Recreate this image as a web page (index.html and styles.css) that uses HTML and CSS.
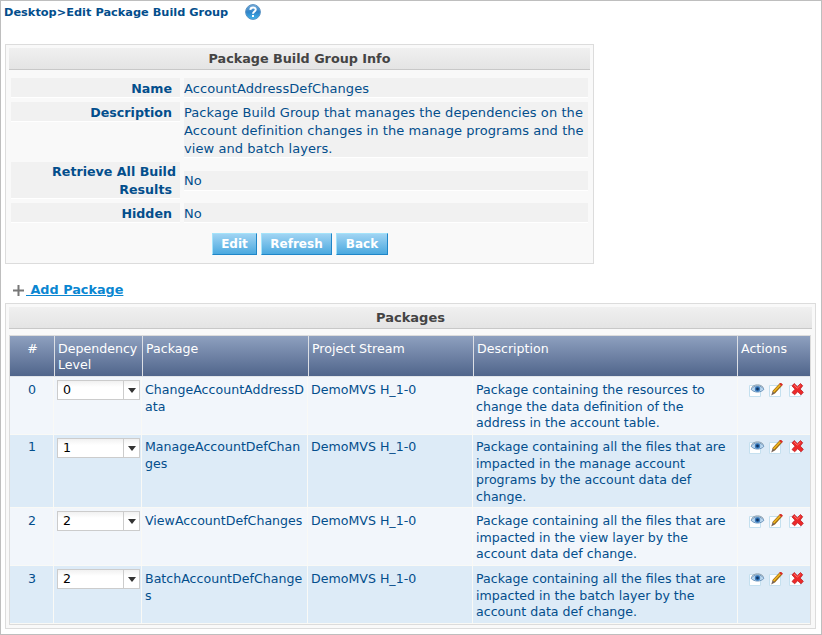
FILE: index.html
```html
<!DOCTYPE html>
<html lang="en">
<head>
<meta charset="utf-8">
<title>Edit Package Build Group</title>
<link rel="stylesheet" href="styles.css">
</head>
<body>
<svg class="defs" width="0" height="0" aria-hidden="true">
  <defs>
    <linearGradient id="help-fill" x1="0" y1="0" x2="0" y2="1"><stop offset="0" stop-color="#78aedb"/><stop offset=".5" stop-color="#2f83c8"/><stop offset="1" stop-color="#40b5ed"/></linearGradient>
    <symbol id="eye" viewBox="0 0 17 16">
      <path d="M.5 2.5h11v11H.5z" fill="#fff" stroke="#c5e0ef"/>
      <path d="M2 6.200C5 2 12 2 15 6.200 12 10 5 10 2 6.200z" fill="#bcd8ef" stroke="#7097bd" stroke-width="1"/>
      <path d="M2.500 4.500C5.500 1 11.500 1 14.500 4.500" fill="none" stroke="#8b9dad" stroke-width="1"/>
      <circle cx="8.500" cy="6" r="2.700" fill="#397cc0"/><circle cx="8.500" cy="6" r="1.400" fill="#12345f"/>
    </symbol>
    <symbol id="pencil" viewBox="0 0 17 16">
      <path d="M.5 2.500h11v11H.5z" fill="#fff" stroke="#c5e0ef"/>
      <path d="M4.500 9.500 11.500 1.800" stroke="#9a6815" stroke-width="3.400"/>
      <path d="M4.500 9 11.500 1.500" stroke="#efb51f" stroke-width="1.800"/>
      <path d="m11.300 2 1.500-1.500" stroke="#d62e26" stroke-width="3.400"/>
      <path d="m3.600 8.200 2.300 2.200-3.700 2.100z" fill="#77665b"/>
    </symbol>
    <symbol id="cross" viewBox="0 0 17 16">
      <path d="M.5 2.500h11v11H.5z" fill="#fff" stroke="#c5e0ef"/>
      <path d="m5.200.5 3.200 3.200L11.500.500l2.200 2.300-2.500 3.300 3.100 3.200-2.200 2.500-3.400-3-3 2.900L3 9.500l3-3.300-3-3.300z" fill="#ed2929" stroke="#bd2026" stroke-width=".8"/>
      <path d="m5.200 2 3.100 3.200 3.200-3" fill="none" stroke="#ff7068" stroke-width="1"/>
    </symbol>
  </defs>
</svg>
<main class="page">
  <header class="crumbs">
    <span class="crumb-text">Desktop&gt;Edit Package Build Group</span>
    <svg class="help" viewBox="0 0 16 16"><circle cx="8" cy="8" r="7.400" fill="url(#help-fill)" stroke="#5b92c2"/><path d="M5.300 5.900C5.500 2.500 10.800 2.700 10.700 5.700 10.600 7.500 8 7.500 8 9.800" fill="none" stroke="#fff" stroke-width="2"/><path d="M7 11h2v2H7z" fill="#fff"/></svg>
  </header>

  <section class="panel info">
    <h2 class="bar">Package Build Group Info</h2>
    <dl class="fields">
      <dt>Name</dt><dd>AccountAddressDefChanges</dd>
      <dt>Description</dt>
      <dd>Package Build Group that manages the dependencies on the<br>Account definition changes in the manage programs and the<br>view and batch layers.</dd>
      <dt class="two"><span class="over">Retrieve All Build</span><br>Results</dt><dd class="mid">No</dd>
      <dt>Hidden</dt><dd>No</dd>
    </dl>
    <div class="buttons"><button class="b-edit">Edit</button><button class="b-refresh">Refresh</button><button class="b-back">Back</button></div>
  </section>

  <div class="add">
    <svg class="plus" viewBox="0 0 11 11"><path d="M5.500 0v11M0 5.500h11" stroke="#777" stroke-width="2"/></svg>
    <a href="#">&nbsp;Add Package</a>
  </div>

  <section class="panel packages">
    <h2 class="bar">Packages</h2>
    <div class="table">
      <div class="row head">
        <div class="c">#</div><div>Dependency<br>Level</div><div>Package</div><div>Project Stream</div><div>Description</div><div>Actions</div>
      </div>
      <div class="row r0">
        <div class="c">0</div><div class="lvl"><span class="select"><span>0</span><i></i></span></div><div>ChangeAccountAddressD<br>ata</div><div>DemoMVS H_1-0</div><div>Package containing the resources to<br>change the data definition of the<br>address in the account table.</div>
        <div class="acts"><svg><use href="#eye"/></svg><svg><use href="#pencil"/></svg><svg><use href="#cross"/></svg></div>
      </div>
      <div class="row alt r1">
        <div class="c">1</div><div class="lvl"><span class="select"><span>1</span><i></i></span></div><div>ManageAccountDefChan<br>ges</div><div>DemoMVS H_1-0</div><div>Package containing all the files that are<br>impacted in the manage account<br>programs by the account data def<br>change.</div>
        <div class="acts"><svg><use href="#eye"/></svg><svg><use href="#pencil"/></svg><svg><use href="#cross"/></svg></div>
      </div>
      <div class="row r2">
        <div class="c">2</div><div class="lvl"><span class="select"><span>2</span><i></i></span></div><div>ViewAccountDefChanges</div><div>DemoMVS H_1-0</div><div>Package containing all the files that are<br>impacted in the view layer by the<br>account data def change.</div>
        <div class="acts"><svg><use href="#eye"/></svg><svg><use href="#pencil"/></svg><svg><use href="#cross"/></svg></div>
      </div>
      <div class="row alt r3">
        <div class="c">3</div><div class="lvl"><span class="select"><span>2</span><i></i></span></div><div>BatchAccountDefChange<br>s</div><div>DemoMVS H_1-0</div><div>Package containing all the files that are<br>impacted in the batch layer by the<br>account data def change.</div>
        <div class="acts"><svg><use href="#eye"/></svg><svg><use href="#pencil"/></svg><svg><use href="#cross"/></svg></div>
      </div>
    </div>
  </section>
</main>
</body>
</html>
```
FILE: styles.css
```css
* { box-sizing: border-box; }
body { margin: 0; background: #fff; color: #034e8c; font: 13px/18px Verdana, "DejaVu Sans", sans-serif; white-space: nowrap; }
.defs { position: absolute; }
.page { width: 822px; height: 635px; border: 1px solid #bebebe; padding: 3px 0 0 4px; overflow: hidden; }

.crumbs { display: flex; height: 40px; align-items: flex-start; }
.crumb-text { width: 240px; margin-left: -1px; font-size: 11.35px; font-weight: bold; line-height: 17px; }
.help { width: 16px; height: 16px; margin-left: 1px; }

.panel { border: 1px solid #dcdcdc; background: #f9f9f9; padding: 3px; }
.bar { margin: 0; height: 22px; border-bottom: 1px solid #c8c8c8; background: linear-gradient(#f0f0f0, #e4e4e4); color: #444; font-size: 12.75px; font-weight: bold; line-height: 21px; text-align: center; }

.info { width: 589px; height: 220px; }
.fields { display: grid; grid-template-columns: 169px 404px; column-gap: 4px; row-gap: 4px; margin: 8px 0 0 2px; align-items: start; }
.fields dt, .fields dd { margin: 0; background: #f1f1f1; border-bottom: 1px solid #fff; padding-top: 2px; min-height: 20px; }
.fields dd { letter-spacing: .07px; margin-bottom: -1px; }
.fields dt { font-size: 12.65px; font-weight: bold; text-align: right; padding-right: 8px; }
.fields dt, .fields dd { height: 20px; }
.fields dt:nth-of-type(2) + dd { height: 56px; }
.fields dd { margin-bottom: 0; }
.over { margin-right: -4px; }
.fields .two { height: 37px; padding-top: 1px; }
.fields .mid { align-self: center; padding-top: 1px; }
.buttons { display: flex; gap: 4px; margin: 10px 0 0 203px; }
.buttons button { height: 22px; padding: 1px 0 0; border: 1px solid; border-color: #a4e3fa #1f86c8 #1f86c8 #a4e3fa; background: linear-gradient(#a0d4f3, #4ba9df); color: #fff; font: bold 12px/19px Verdana, "DejaVu Sans", sans-serif; }
.b-edit { width: 45px; }
.b-refresh { width: 71px; }
.b-back { width: 52px; }

.add { display: flex; height: 39px; padding: 17px 0 0 8px; align-items: flex-start; }
.add a { color: #0a86d1; font-size: 12.8px; font-weight: bold; line-height: 18px; margin-left: 2px; }
.plus { width: 11px; height: 11px; margin-top: 4px; }

.packages { width: 811px; height: 326px; }
.packages .bar { font-size: 13px; }
.table { margin-top: 6px; width: 802px; height: 290px; border: 1px solid #dcdcdc; background: #f9f9f9; font-size: 12.6px; line-height: 16.5px; }
.row { display: grid; grid-template-columns: 44px 88px 166px 165px 265px 71px; background: #f2f6fb; }
.row > div { padding: 5px 0 0 3px; border-right: 1px solid #f9f9f6; }
.row > div:last-child { border-right: 0; }
.row > .c { padding-left: 1px; text-align: center; }
.head { grid-template-columns: 45px 88px 166px 165px 264px 71px; height: 41px; background: linear-gradient(#8ea0bf, #50658b); color: #fff; line-height: 16px; border-bottom: 1px solid #e1e5ea; }
.head > div { border-color: #dcdfe5; }
.row.alt { background: #ddebf7; }
.r0 { height: 58px; }
.r1 { height: 73px; }
.r2, .r3 { height: 58px; }
.r1 > div { padding-top: 4px; }
.row:not(.head) { border-bottom: 1px solid #f9f9f6; }
.row > .lvl { padding: 3px 0 0 3px; }
.head > div:nth-child(2) { padding-top: 5px; }
.select { display: flex; width: 83px; height: 20px; border: 1px solid #ccc; background: linear-gradient(#f1f1f1, #fff 6px); color: #000; line-height: 18px; }
.select span { width: 66px; padding-left: 5px; border-right: 1px solid #ccc; }
.select i { width: 0; height: 0; margin: 7px 0 0 4px; border: 4px solid transparent; border-top: 5px solid #333; border-bottom: 0; }
.row > .acts { display: flex; gap: 3px; padding: 6px 0 0 11px; }
.r1 > .acts { padding-top: 5px; }
.acts svg { width: 17px; height: 16px; }
```
